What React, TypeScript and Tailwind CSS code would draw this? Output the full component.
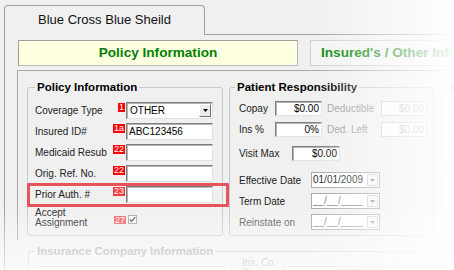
import React from "react";

const sunken =
  "border border-t-[#7e7e7e] border-l-[#7e7e7e] border-r-[#e2e2e2] border-b-[#e2e2e2] shadow-[inset_1px_1px_0_#b4b4b4] bg-white";
const disabledBox = "border border-[#cdcdcd] bg-[#fbfbfb]";

function Badge({ text, color = "bg-[#ff0000]" }: { text: string; color?: string }) {
  return (
    <span
      className={`${color} mt-[1px] h-[9px] px-[1px] text-[9px] leading-[9px] text-white font-['Liberation_Sans',Arial,sans-serif]`}
    >
      {text}
    </span>
  );
}

function Tri({ fill }: { fill: string }) {
  return (
    <svg width="5" height="3" viewBox="0 0 5 3">
      <path d="M0 0H5L2.5 3Z" fill={fill} />
    </svg>
  );
}

function PolicyRow({
  label,
  badge,
  badgeColor,
  children,
}: {
  label: string;
  badge: string;
  badgeColor?: string;
  children?: React.ReactNode;
}) {
  return (
    <div className="flex h-[17px] items-start">
      <div className="w-[78px] self-center leading-[12px]">{label}</div>
      <div className="flex w-[13px] justify-end pr-[1px]">
        <Badge text={badge} color={badgeColor} />
      </div>
      {children ?? <div className={`${sunken} h-[17px] w-[87px]`} />}
    </div>
  );
}

function DateBox({ value, dim }: { value: string; dim?: boolean }) {
  return (
    <div className="flex h-[16px] w-[69px] items-center border border-[#a8a8a8] bg-white">
      <span className={`flex-1 pl-[1px] text-[10px] leading-[14px] ${dim ? "text-[#7a7a7a]" : "text-[#222]"}`}>
        {value}
      </span>
      <div className="mr-[1px] flex h-[12px] w-[11px] items-center justify-center border border-[#cfcfcf] bg-[#f6f6f6]">
        <Tri fill="#8c8c8c" />
      </div>
    </div>
  );
}

export default function App() {
  return (
    <div className="relative h-[270px] w-[454px] overflow-hidden bg-[#f0f0f0] font-['Liberation_Sans',Arial,sans-serif] text-[10px] text-[#222]">
      {/* tab strip */}
      <div className="flex h-[35px] items-end pl-[4px]">
        <div className="flex h-[30px] w-[201px] shrink-0 items-center justify-center rounded-t-[4px] border-x border-t border-[#a0a0a0] bg-[#f0f0f0] pb-[1px] text-[13px] text-[#111]">
          Blue Cross Blue Sheild
        </div>
        <div className="h-full flex-1 border-b border-[#a0a0a0]" />
      </div>

      {/* tab body */}
      <div className="ml-[4px] h-[235px] border-l border-[#a0a0a0] pl-[13px] pt-[5px]">
        {/* banners */}
        <div className="flex gap-[12px]">
          <div className="flex h-[26px] w-[280px] shrink-0 items-center justify-center border border-[#b8b8b8] border-t-[#a0a0a0] border-l-[#a0a0a0] bg-[#ffffe1] text-[13.6px] font-bold text-[#008000]">
            Policy Information
          </div>
          <div className="flex h-[26px] w-[300px] shrink-0 items-center border border-[#cfcfcf] bg-[#f4f4f4] pl-[10px] text-[13.6px] font-bold text-[#008000]">
            Insured's / Other Information
          </div>
        </div>

        {/* panel */}
        <div className="ml-[-1px] mt-[4px] h-[170px] border-l border-t border-[#a8a8a8] pl-[9px] pt-[9px]">
          <div className="flex items-stretch gap-[6px]">
            {/* Policy Information group */}
            <fieldset className="w-[196px] shrink-0 rounded-[3px] border border-[#c9c9c9] px-[7px] pb-[6px] pt-[8px]">
              <legend className="px-[2px] text-[11.5px] font-bold leading-[14px] text-[#000]">
                Policy Information
              </legend>
              <div className="flex flex-col gap-[4px]">
                <PolicyRow label="Coverage Type" badge="1">
                  <div className={`${sunken} flex h-[17px] w-[87px] items-center`}>
                    <span className="flex-1 pl-[3px] text-[10px] leading-[14px] text-[#000]">OTHER</span>
                    <div className="mr-[1px] flex h-[13px] w-[12px] items-center justify-center border border-l-white border-t-white border-r-[#707070] border-b-[#707070] bg-[#ececec]">
                      <Tri fill="#000" />
                    </div>
                  </div>
                </PolicyRow>
                <PolicyRow label="Insured ID#" badge="1a">
                  <div className={`${sunken} flex h-[17px] w-[87px] items-center pl-[2px] text-[10px] text-[#000]`}>
                    ABC123456
                  </div>
                </PolicyRow>
                <PolicyRow label="Medicaid Resub" badge="22" />
                <PolicyRow label="Orig. Ref. No." badge="22" />
                <PolicyRow label="Prior Auth. #" badge="23" badgeColor="bg-[#f0393f]" />
                <div className="mt-[1px] flex items-start">
                  <div className="w-[78px] leading-[10px]">
                    Accept
                    <br />
                    Assignment
                  </div>
                  <div className="mt-[8px] flex items-start">
                    <span className="ml-[1px] h-[8px] bg-[#f26266] px-[1px] text-[9px] leading-[8px] text-white">27</span>
                    <div className="ml-[2px] mt-[-1px] flex h-[9px] w-[9px] items-center justify-center border border-[#a8a8a8] bg-white">
                      <svg width="7" height="7" viewBox="0 0 7 7">
                        <path d="M0.8 3.4L2.6 5.3L6.2 1.2" stroke="#444" strokeWidth="1.2" fill="none" />
                      </svg>
                    </div>
                  </div>
                </div>
              </div>
            </fieldset>

            {/* Patient Responsibility group */}
            <fieldset className="w-[205px] shrink-0 rounded-[3px] border border-[#c9c9c9] px-[5px] pb-[5px] pt-[7px]">
              <legend className="px-[2px] text-[11.5px] font-bold leading-[14px] text-[#000]">
                Patient Responsibility
              </legend>
              <div className="flex flex-col pl-[4px]">
                <div className="flex h-[15px] items-center">
                  <span className="w-[36px]">Copay</span>
                  <div className={`${sunken} h-[15px] w-[47px] pr-[2px] text-right leading-[13px] text-[#000]`}>$0.00</div>
                  <span className="ml-[5px] w-[54px] text-[#9a9a9a]">Deductible</span>
                  <div className={`${disabledBox} h-[15px] w-[46px] pr-[2px] text-right leading-[13px] text-[#b0b0b0]`}>$0.00</div>
                </div>
                <div className="mt-[6px] flex h-[15px] items-center">
                  <span className="w-[36px]">Ins %</span>
                  <div className={`${sunken} h-[15px] w-[47px] pr-[2px] text-right leading-[13px] text-[#000]`}>0%</div>
                  <span className="ml-[5px] w-[54px] text-[#9a9a9a]">Ded. Left</span>
                  <div className={`${disabledBox} h-[15px] w-[46px] pr-[2px] text-right leading-[13px] text-[#b0b0b0]`}>$0.00</div>
                </div>
                <div className="mt-[9px] flex h-[15px] items-center">
                  <span className="w-[53px]">Visit Max</span>
                  <div className={`${sunken} h-[15px] w-[48px] pr-[2px] text-right leading-[13px] text-[#000]`}>$0.00</div>
                </div>
                <div className="mt-[11px] flex h-[16px] items-center">
                  <span className="w-[72px]">Effective Date</span>
                  <DateBox value="01/01/2009" />
                </div>
                <div className="mt-[5px] flex h-[16px] items-center">
                  <span className="w-[72px]">Term Date</span>
                  <DateBox value="__/__/____" dim />
                </div>
                <div className="mt-[5px] flex h-[16px] items-center">
                  <span className="w-[72px] text-[#555]">Reinstate on</span>
                  <DateBox value="__/__/____" dim />
                </div>
              </div>
            </fieldset>

            {/* third group, cut off */}
            <div className="ml-[2px] flex w-[80px] shrink-0 flex-col gap-[6px] self-start">
              <fieldset className="h-[88px] rounded-[3px] border border-[#c9c9c9] px-[5px]">
                <legend className="px-[2px] text-[11.5px] font-bold leading-[14px] text-[#111]">Copay</legend>
                <div className="mt-[6px] h-[15px] w-[60px] border border-[#c0c0c0] bg-white" />
                <div className="mt-[6px] h-[15px] w-[60px] border border-[#c0c0c0] bg-white" />
                <div className="mt-[6px] h-[15px] w-[60px] border border-[#c0c0c0] bg-white" />
              </fieldset>
              <div className="h-[60px] rounded-[3px] border border-[#c9c9c9]" />
            </div>
          </div>

          {/* Insurance Company Information */}
          <fieldset className="ml-[1px] mt-[8px] w-[500px] rounded-[3px] border border-[#c9c9c9] px-[6px] pb-[6px]">
            <legend className="px-[2px] text-[11.5px] font-bold leading-[14px] text-[#a2a2a2]">
              Insurance Company Information
            </legend>
            <div className="flex items-start">
              <div className={`${disabledBox} ml-[2px] mt-[8px] h-[17px] w-[188px] pl-[3px] leading-[15px] text-[#a8a8a8]`}>
                Blue Cross Blue Sheild
              </div>
              <div className="ml-[17px] w-[41px] leading-[10px] text-[#999]">
                Ins. Co.
                <br />
                Phone
              </div>
              <div className={`${disabledBox} mt-[8px] h-[17px] w-[141px] pl-[3px] leading-[15px] text-[#a8a8a8]`}>
                1-866-878-8487
              </div>
            </div>
          </fieldset>
        </div>
      </div>

      {/* fades */}
      <div className="pointer-events-none absolute inset-0 bg-[linear-gradient(to_right,rgba(255,255,255,0)_312px,rgba(255,255,255,0.97)_454px)]" />
      <div className="pointer-events-none absolute inset-0 bg-[linear-gradient(to_bottom,rgba(255,255,255,0)_205px,rgba(255,255,255,0.75)_270px)]" />

      {/* highlight */}
      <div className="pointer-events-none absolute left-[27px] top-[183px] h-[24px] w-[202px] rounded-[1px] border-[3px] border-[#e8535a]" />
    </div>
  );
}
